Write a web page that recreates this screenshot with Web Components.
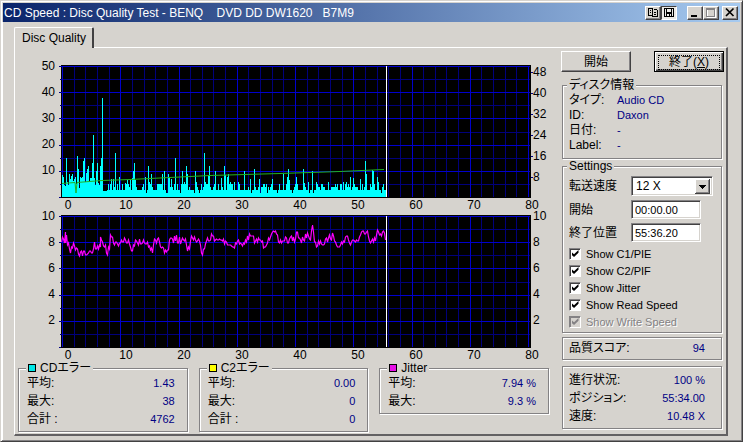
<!DOCTYPE html>
<html lang="ja">
<head>
<meta charset="utf-8">
<title>CD Speed : Disc Quality Test</title>
<style>
html, body { margin: 0; }
body {
  --face: #d6d3ce; --dark: #848284; --value: #000084;
  background: var(--face); color: #000;
  font: 12px/14px "Liberation Sans", "Noto Sans CJK JP", sans-serif;
  font-feature-settings: "palt";
}
</style>
</head>
<body>
<cd-window></cd-window>
<script>
const define = (name, html, setup) => customElements.define(name, class extends HTMLElement {
  connectedCallback() {
    if (this.shadowRoot) return;
    const t = document.createElement('template');
    t.innerHTML = html;
    this.attachShadow({ mode: 'open' }).append(t.content.cloneNode(true));
    if (setup) setup(this, this.shadowRoot);
  }
});

define('title-bar', `
<style>
:host { display: flex; align-items: center; height: 19px; padding: 0 2px 0 1px; color: #fff; font-size: 12px;
  background: linear-gradient(90deg, #0a246a, #a6caf0); }
h1 { flex: 1; margin: 0; font: inherit; white-space: pre; overflow: hidden; }
.set { display: flex; margin-left: 10px; }
.set.last { margin-left: 3px; }
button { width: 16px; height: 14px; padding: 0; border: 1px solid; border-color: #fff #424142 #424142 #fff;
  background: var(--face); box-shadow: inset -1px -1px var(--dark); display: grid; place-items: center; }
button.on { border-color: #424142 #fff #fff #424142; background: #ebe9e6; box-shadow: none; }
svg { display: block; width: 12px; height: 11px; fill: none; stroke: #000; shape-rendering: crispEdges; }
</style>
<h1><slot></slot></h1>
<div class="set">
  <button aria-label="Copy"><svg viewBox="0 0 12 11"><path d="M1.5 1.5h4v7h-4zM6.5 2.5h3l1 1v6h-5V3M3 3.5h1M3 5.5h1M7 5.5h2M7 7.5h2"/></svg></button>
  <button class="on" aria-label="Save"><svg viewBox="0 0 12 11"><path d="M1.5 1.500h9v8h-9zM3.500 2v3h5V2M3.500 9V6.500h5V9M6.500 7v2"/></svg></button>
</div>
<div class="set">
  <button aria-label="Minimize"><svg viewBox="0 0 12 11"><path stroke-width="2" d="M2 9h6"/></svg></button>
  <button aria-label="Maximize" disabled><svg viewBox="0 0 12 11"><path stroke="#fff" d="M2.5 2.5h8v8h-8z"/><path stroke="#848284" d="M1.5 1.5h8v8h-8zM1 2.5h9"/></svg></button>
</div>
<div class="set last">
  <button aria-label="Close"><svg viewBox="0 0 12 11" style="shape-rendering:auto"><path stroke-width="1.7" d="M2 1.5l7.500 7.500M9.500 1.500L2 9"/></svg></button>
</div>`);

define('tab-page', `
<style>
:host { display: flex; flex-direction: column; padding: 5px 13px 4px 11px; border-left: 1px solid #fff; }
.tab { align-self: flex-start; position: relative; padding: 3px 6px 2px 7px; height: 15px; font: 12px/15px "Liberation Sans", sans-serif;
  margin-bottom: -1px; color: #000; background: var(--face); border: 0 solid; border-width: 1px 2px 0 1px;
  border-color: #fff #424142 #424142 #fff; border-radius: 2px 2px 0 0; box-sizing: content-box; }
.page { flex: 1; border: 1px solid; border-color: #fff #636163 #636163 #fff; border-width: 1px 2px 2px 1px; }
</style>
<button class="tab" role="tab" aria-selected="true">Disc Quality</button>
<div class="page" role="tabpanel"><slot></slot></div>`);

define('group-box', `
<style>
:host { display: block; }
fieldset { margin: 0 1px 1px 0; min-width: 0; padding: 0 var(--pad-r, 6px) var(--pad-b, 6px) var(--pad-l, 6px); border: 1px solid var(--dark);
  box-shadow: 1px 1px #fff, inset 1px 1px #fff; }
legend { padding: 0 2px; margin-left: var(--legend, -2px); height: 12px; line-height: 12px; background: var(--face);
  display: flex; align-items: center; gap: 4px; white-space: nowrap; }
i { width: 6px; height: 6px; border: 1px solid #000; }
</style>
<fieldset><legend></legend><slot></slot></fieldset>`, (el, root) => {
  const lg = root.querySelector('legend');
  if (!el.hasAttribute('label')) { lg.remove(); return; }
  if (el.hasAttribute('swatch')) {
    const i = document.createElement('i');
    i.style.background = el.getAttribute('swatch');
    lg.append(i);
  }
  lg.append(el.getAttribute('label'));
});

define('value-row', `
<style>
:host { display: flex; height: var(--row, 18px); line-height: var(--row, 18px); white-space: nowrap; }
span { width: var(--label, auto); }
output { color: var(--value); margin-left: var(--push, auto); font-size: 11px; }
</style>
<span></span><output><slot></slot></output>`, (el, root) => {
  root.querySelector('span').textContent = el.getAttribute('label');
});

define('push-button', `
<style>
:host { display: block; width: 70px; }
button { width: 100%; height: 21px; padding: 0; font: inherit; color: #000; background: var(--face); border: 1px solid;
  border-color: #fff #424142 #424142 #fff; box-shadow: inset -1px -1px var(--dark); }
:host([default]) button { border-color: #000; box-shadow: inset 1px 1px #fff, inset -1px -1px #424142, inset -2px -2px var(--dark); padding: 3px; }
:host([default]) span { display: block; height: 13px; line-height: 13px; border: 1px dotted #000; }
</style>
<button><span><slot></slot></span></button>`);

define('check-row', `
<style>
:host { display: block; height: 17px; }
label { display: flex; align-items: center; gap: 5px; height: 17px; font-size: 11px; white-space: nowrap; }
input { appearance: none; margin: 0; width: 12px; height: 12px; box-sizing: border-box; border: 1px solid;
  border-color: var(--dark) #fff #fff var(--dark); box-shadow: inset 1px 1px #424142; background: #fff; display: grid; place-items: center; }
input:checked::before { content: ""; width: 7px; height: 7px; background: #000;
  clip-path: polygon(0 29%, 36% 62%, 100% 0, 100% 40%, 36% 100%, 0 68%); }
:host([disabled]) label { color: var(--dark); text-shadow: 1px 1px #fff; }
:host([disabled]) input { background: var(--face); box-shadow: inset 1px 1px var(--dark); }
:host([disabled]) input::before { background: var(--dark); }
</style>
<label><input type="checkbox" checked><slot></slot></label>`, (el, root) => {
  root.querySelector('input').disabled = el.hasAttribute('disabled');
});

define('speed-settings', `
<style>
:host { display: block; }
.f { display: grid; grid-template-columns: 62px 1fr; row-gap: 4px; align-items: center; padding-top: 4px; }
input, .sel { box-sizing: border-box; border: 1px solid; border-color: var(--dark) #fff #fff var(--dark); background: #fff;
  box-shadow: inset 1px 1px #424142, inset -1px -1px var(--face); }
input { width: 70px; height: 19px; padding: 0 3px; font: 11px/14px "Liberation Sans", sans-serif; }
.sel { position: relative; width: 82px; height: 20px; }
select { appearance: none; width: 100%; height: 100%; border: 0; padding: 0 20px 0 4px; background: none; color: #000; font: 12px/14px "Liberation Sans", sans-serif; }
.sel svg { position: absolute; right: 2px; top: 2px; width: 15px; height: 15px; pointer-events: none; shape-rendering: crispEdges; }
.c { padding-top: 3px; }
</style>
<div class="f">
  <label for="speed">転送速度</label>
  <div class="sel"><select id="speed"><option>12 X</option></select>
    <svg viewBox="0 0 15 15"><path fill="#424142" d="M0 0h15v15H0z"/><path fill="#fff" d="M0 0h14v14H0z"/><path fill="#848284" d="M1 1h13v13H1z"/><path fill="#d6d3ce" d="M1 1h12v12H1z"/><path d="M4 6h7v1H4zM5 7h5v1H5zM6 8h3v1H6zM7 9h1v1H7z"/></svg></div>
  <label for="start">開始</label><input id="start" value="00:00.00">
  <label for="end">終了位置</label><input id="end" value="55:36.20">
</div>
<div class="c">
  <check-row>Show C1/PIE</check-row>
  <check-row>Show C2/PIF</check-row>
  <check-row>Show Jitter</check-row>
  <check-row>Show Read Speed</check-row>
  <check-row disabled>Show Write Speed</check-row>
</div>`);

/* Plot units: 470 across, 133 down. Error peaks are [position, height]. */
const PEAKS = [[1,23],[2,21],[5,40],[8,24],[10,22],[11,24],[14,21],[16,42],[17,29],[19,21],[20,20],[22,37],[23,40],[25,25],[26,29],[27,32],[31,35],[32,63],[35,27],[36,35],[39,32],[40,40],[41,100],[47,14],[50,19],[52,19],[54,45],[56,14],[58,21],[61,14],[64,15],[66,18],[69,18],[71,20],[72,27],[73,35],[74,18],[84,21],[87,32],[88,16],[90,24],[101,24],[103,27],[107,24],[108,20],[110,19],[114,40],[121,27],[123,16],[125,32],[126,24],[134,27],[135,16],[143,45],[144,16],[147,23],[148,32],[154,27],[160,20],[163,32],[164,23],[166,21],[167,24],[169,16],[173,16],[177,16],[183,27],[189,19],[193,29],[198,19],[211,19],[222,24],[226,21],[227,29],[228,18],[235,21],[242,29],[243,15],[247,16],[251,27],[255,16],[267,16],[282,16],[285,16],[289,21],[292,20],[299,19],[304,37],[305,24],[311,28],[312,27],[316,21],[317,16]];
const JITTER = [0,27,2,24,3,28,4,17,4,28,5,20,6,30,7,28,8,34,9,38,10,32,12,28,13,31,14,35,16,34,17,39,18,41,19,37,20,36,21,41,23,36,25,40,27,38,29,36,30,38,32,34,33,27,34,34,36,31,37,34,38,30,39,32,39,22,41,27,43,32,44,30,45,38,46,40,47,32,48,34,49,20,51,22,52,28,54,27,57,31,58,28,60,25,62,27,64,25,66,28,67,25,68,29,70,36,72,30,75,26,77,30,78,24,80,29,82,25,84,29,86,27,88,31,90,33,91,38,92,30,93,24,95,28,97,23,98,27,100,33,102,33,103,38,105,37,107,35,108,25,110,23,112,28,113,21,114,26,115,20,116,28,118,22,119,29,121,23,124,24,125,30,126,36,128,34,130,21,132,25,133,22,135,27,138,26,139,30,141,40,143,34,146,23,148,26,150,19,153,26,159,25,164,26,171,32,176,26,181,31,184,25,189,21,194,26,199,25,203,32,207,23,210,19,215,19,217,27,222,26,225,23,227,28,230,21,233,27,236,17,239,25,242,25,246,18,249,25,251,10,253,27,255,32,259,26,262,30,267,23,272,21,278,32,282,26,285,21,288,28,292,25,296,26,298,22,302,16,306,16,307,22,310,26,314,26,316,15,319,19,322,16,324,25];

define('disc-chart', `
<style>
:host { display: grid; grid-template-columns: 46px 1fr 30px; font: 12px/14px "Liberation Sans", sans-serif; }
svg { display: block; width: 100%; height: 133px; background: #000; overflow: visible; shape-rendering: crispEdges; }
.l, .r { display: grid; align-content: start; align-items: center; height: 133px; }
.l { grid-auto-rows: 26px; margin-top: -12px; text-align: right; padding-right: 6px; }
.r { padding-left: 2px; grid-auto-rows: 26px; margin-top: -12px; }
:host([kind=errors]) .r { grid-auto-rows: 21px; margin-top: -4px; }
.l, .r { margin-bottom: -20px; }
.x { grid-column: 1 / -1; display: grid; grid-auto-flow: column; grid-auto-columns: 1fr; margin-left: 24px; text-align: center;
  height: var(--axis, 14px); }
</style>
<div class="l"></div><svg viewBox="0 0 470 133" preserveAspectRatio="none"></svg><div class="r"></div><div class="x"></div>`, (el, root) => {
  const errors = el.getAttribute('kind') === 'errors';
  const spans = a => a.map(t => `<span>${t}</span>`).join('');
  root.querySelector('.l').innerHTML = spans(errors ? [50,40,30,20,10] : [10,8,6,4,2]);
  root.querySelector('.r').innerHTML = spans(errors ? [48,40,32,24,16,8] : [10,8,6,4,2]);
  root.querySelector('.x').innerHTML = spans([0,10,20,30,40,50,60,70,80]);
  let seed = 7;
  const rnd = () => (seed = (seed * 16807) % 2147483647) / 2147483647;
  let minor = '', major = '', ticks = '';
  for (let i = 0; i <= 40; i++) {
    const x = Math.round(1 + i * 11.65), s = `M${x}.5 0V133`;
    if (i % 5) minor += s; else major += s;
  }
  for (let i = 0; i <= 10; i++) {
    const y = Math.round(1 + i * 13.1);
    if (i % 2) { minor += `M0 ${y}.5H470`; ticks += `M-1 ${y}.5H0`; }
    else { major += `M0 ${y}.5H470`; ticks += `M-2 ${y}.5H0`; }
  }
  if (errors) for (let i = 0; i < 6; i++) ticks += `M470 ${7 + i * 21}.5h2`;
  let out = `<path stroke="#00007b" d="${minor}"/><path stroke="#0000ce" d="${major}"/><path stroke="#000084" d="${ticks}"/>`;
  if (errors) {
    const h = [];
    for (let x = 1; x < 325; x++) {
      const r = rnd();
      h[x] = x < 42 ? 10 + Math.floor(r * 12) : r < .08 ? 5 : r < .62 ? 8 : r < .85 ? 11 : 14;
    }
    for (let x = 42; x < 46; x++) h[x] = 7;
    PEAKS.forEach(([x, v]) => h[x] = v);
    let d = '';
    h.forEach((v, x) => d += `M${x}.5 133v-${v}`);
    out += `<path stroke="#00ffff" d="${d}"/>
      <path fill="none" stroke="#21b221" style="shape-rendering:auto" d="M1 118.500L14 117.500L15 128L16 117.500L41 115.500L69 114.500L149 110.500L219 108.500L279 106.500L323 104.500"/>`;
  } else {
    const pts = [];
    for (let i = 0; i < JITTER.length; i += 2) {
      const x = JITTER[i], y = JITTER[i + 1];
      pts.push([x, y]);
      const nx = JITTER[i + 2], ny = JITTER[i + 3];
      for (let k = x + 1; k < nx; k++) pts.push([k, y + (ny - y) * (k - x) / (nx - x) + (rnd() - .5) * 7]);
    }
    out += `<polyline fill="none" stroke="#ff00ff" stroke-width="1.2" style="shape-rendering:auto" points="${pts.map(p => (Math.round(p[0]) + .5) + ',' + Math.round(p[1])).join(' ')}"/>`;
  }
  out += `<path stroke="#fff" d="M325.500 0V133"/><path stroke="#000" d="M0 .5H470M0 132.500H470M469.500 0V133"/>`;
  root.querySelector('svg').innerHTML = out;
});

define('cd-window', `
<style>
:host { display: flex; flex-direction: column; box-sizing: border-box; min-height: 100vh; padding: 2px 1px 1px 1px;
  background: var(--face); border: 1px solid; border-color: var(--face) #424142 #424142 var(--face); box-shadow: inset 1px 1px #fff, inset -1px -1px var(--dark); }
title-bar { margin: 0 1px 0 1px; }
tab-page { flex: 1; }
.main { display: grid; grid-template-columns: 1fr 165px; }
.left { padding-top: 17px; }
.first { --axis: 17px; }
.stats { display: grid; grid-template-columns: repeat(3, 1fr); gap: 10px; align-items: start; padding: 0 11px 0 3px;
  --pad-l: 8px; --pad-r: 12px; --pad-b: 3px; --legend: -1px; }
.right { padding: 3px 3px 0 1px; }
.buttons { display: flex; justify-content: space-between; margin-right: -1px; margin-left: -1px; }
.info { --row: 15px; --label: 48px; --push: 0; margin-top: 7px; --pad-b: 5px; }
.info value-row:first-of-type { margin-top: 2px; }
.set { margin-top: 1px; --pad-b: 2px; }
.score { margin-top: 4px; --row: 21px; --pad-b: 0px; --pad-r: 16px; }
.prog { margin-top: 6px; --pad-b: 3px; --pad-r: 16px; }
.prog value-row:first-of-type { margin-top: 4px; }
</style>
<title-bar>CD Speed : Disc Quality Test - BENQ    DVD DD DW1620   B7M9</title-bar>
<tab-page>
<div class="main">
  <div class="left">
    <disc-chart class="first" kind="errors"></disc-chart>
    <disc-chart kind="jitter"></disc-chart>
    <div class="stats">
      <group-box label="CDエラー" swatch="#00e7e7"><value-row label="平均:">1.43</value-row><value-row label="最大:">38</value-row><value-row label="合計 :">4762</value-row></group-box>
      <group-box label="C2エラー" swatch="#ffff00"><value-row label="平均:">0.00</value-row><value-row label="最大:">0</value-row><value-row label="合計 :">0</value-row></group-box>
      <group-box label="Jitter" swatch="#e710e7"><value-row label="平均:">7.94 %</value-row><value-row label="最大:">9.3 %</value-row></group-box>
    </div>
  </div>
  <div class="right">
    <div class="buttons"><push-button>開始</push-button><push-button default>終了(<u>X</u>)</push-button></div>
    <group-box class="info" label="ディスク情報"><value-row label="タイプ:">Audio CD</value-row><value-row label="ID:">Daxon</value-row><value-row label="日付:">-</value-row><value-row label="Label:">-</value-row></group-box>
    <group-box class="set" label="Settings"><speed-settings></speed-settings></group-box>
    <group-box class="score"><value-row label="品質スコア:">94</value-row></group-box>
    <group-box class="prog"><value-row label="進行状況:">100 %</value-row><value-row label="ポジション:">55:34.00</value-row><value-row label="速度:">10.48 X</value-row></group-box>
  </div>
</div>
</tab-page>`);
</script>
</body>
</html>
